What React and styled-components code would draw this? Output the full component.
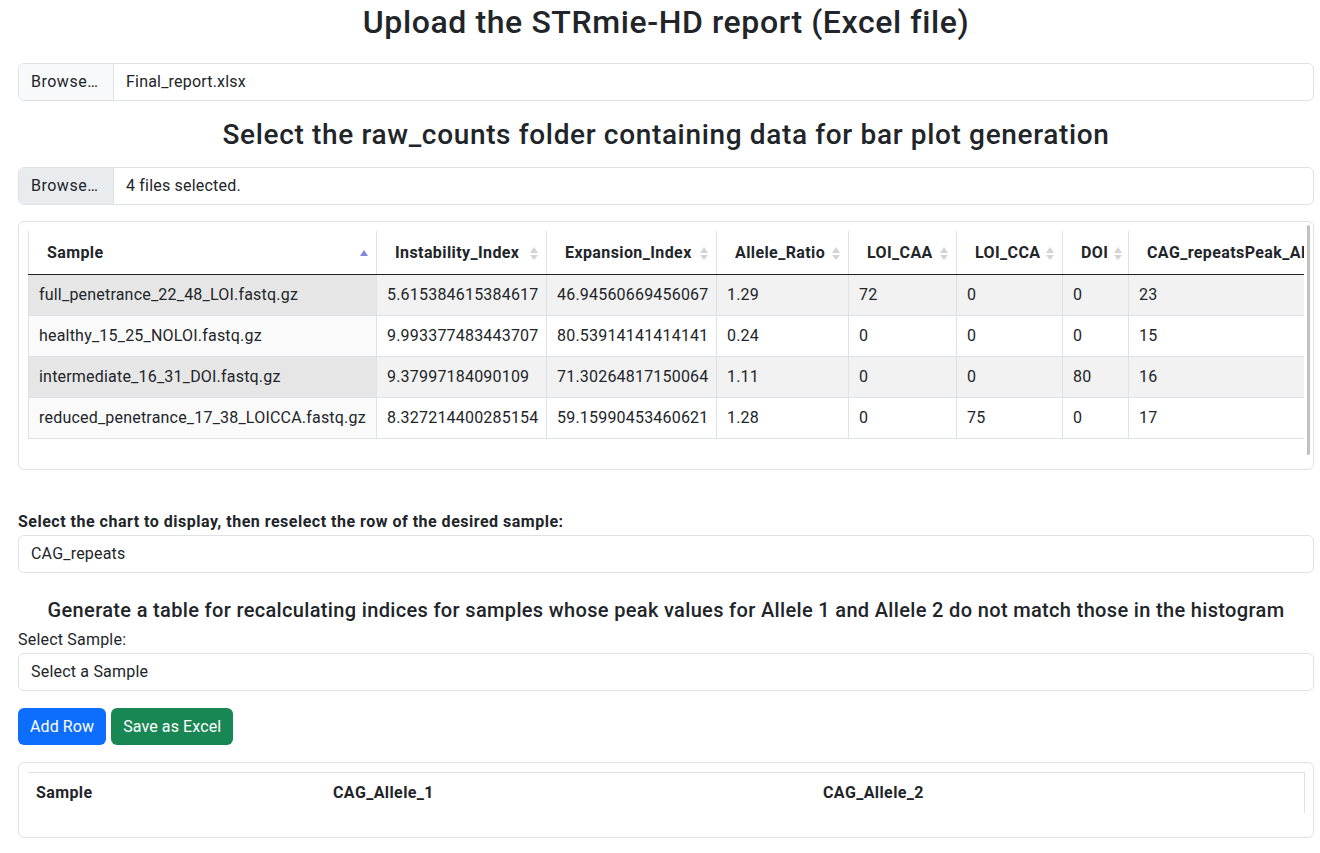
import React from "react";
import styled, { createGlobalStyle } from "styled-components";

const Global = createGlobalStyle`
  html, body { margin: 0; padding: 0; background: #fff; }
  body {
    font-family: Roboto, "Noto Sans", "Liberation Sans", sans-serif;
    font-size: 16px;
    line-height: 24px;
    letter-spacing: 0.2px;
    color: #212529;
  }
  * { box-sizing: border-box; }
`;

const Page = styled.div`
  width: 1296px;
  margin-left: 18px;
  display: flex;
  flex-direction: column;
`;

const Heading = styled.div`
  text-align: center;
  font-weight: 500;
  font-size: ${(p) => p.$size}px;
  line-height: ${(p) => p.$lh}px;
  letter-spacing: ${(p) => p.$ls}px;
  margin: ${(p) => p.$margin};
`;

const InputGroup = styled.div`
  display: flex;
  height: 38px;
  border: 1px solid #dee2e6;
  border-radius: 6px;
  overflow: hidden;
`;

const BrowseBtn = styled.div`
  width: 95px;
  flex: none;
  padding: 0 12px;
  display: flex;
  align-items: center;
  letter-spacing: 0.5px;
  background: ${(p) => (p.$hover ? "#e9ecef" : "#f8f9fa")};
  border-right: 1px solid #dee2e6;
`;

const FileName = styled.div`
  padding: 0 12px;
  display: flex;
  align-items: center;
`;

const TableCard = styled.div`
  margin-top: 16px;
  border: 1px solid #dee2e6;
  border-radius: 6px;
  padding: 3px 3px 14px 9px;
`;

const ScrollRow = styled.div`
  display: flex;
  height: 230px;
`;

const Clip = styled.div`
  flex: 1;
  min-width: 0;
  overflow: hidden;
  padding-top: 6px;
`;

const Thumb = styled.div`
  width: 3px;
  height: 230px;
  margin-left: 3px;
  background: #c1c1c1;
  border-radius: 2px;
  flex: none;
`;

const DataTable = styled.table`
  border-collapse: collapse;
  table-layout: fixed;
  width: 1300px;
`;

const HeadCell = styled.th`
  text-align: left;
  font-weight: 700;
  padding: 10px 8px 9px 18px;
  border-left: 1px solid #dee2e6;
  border-bottom: 1px solid #222;
  white-space: nowrap;
  overflow: hidden;
`;

const HeadInner = styled.div`
  display: flex;
  align-items: center;
  justify-content: space-between;
  gap: 6px;
`;

const HeadText = styled.span`
  white-space: nowrap;
  letter-spacing: 0.4px;
`;

const SortIcon = styled.span`
  display: flex;
  flex-direction: column;
  gap: 2px;
  flex: none;
  width: 8px;
`;

const Tri = styled.span`
  width: 0;
  height: 0;
  border-left: 4px solid transparent;
  border-right: 4px solid transparent;
  ${(p) =>
    p.$down
      ? `border-top: 5px solid ${p.$color};`
      : `border-bottom: 6px solid ${p.$color};`}
`;

const Cell = styled.td`
  padding: 8px 10px;
  border-left: 1px solid #dee2e6;
  border-bottom: 1px solid #dee2e6;
  white-space: nowrap;
  overflow: hidden;
  background: ${(p) =>
    p.$striped ? (p.$sorted ? "#e6e6e6" : "#f2f2f2") : p.$sorted ? "#fafafa" : "#fff"};
`;

const FieldLabel = styled.div`
  font-weight: ${(p) => (p.$bold ? 700 : 400)};
  letter-spacing: ${(p) => (p.$bold ? "0.5px" : "0.2px")};
  margin-top: ${(p) => p.$mt}px;
  margin-bottom: 1px;
`;

const SelectBox = styled.div`
  height: 38px;
  border: 1px solid #dee2e6;
  border-radius: 6px;
  padding: 0 12px;
  display: flex;
  align-items: center;
`;

const ButtonRow = styled.div`
  display: flex;
  gap: 5px;
  margin-top: 17px;
`;

const Button = styled.div`
  height: 37px;
  padding: 0 12px;
  display: flex;
  align-items: center;
  color: #fff;
  letter-spacing: 0.1px;
  border-radius: 6px;
  background: ${(p) => (p.$variant === "success" ? "#198754" : "#0d6efd")};
`;

const BottomCard = styled.div`
  margin-top: 17px;
  border: 1px solid #dee2e6;
  border-radius: 6px;
  padding: 9px 9px 24px 9px;
`;

const BottomTable = styled.table`
  border-collapse: collapse;
  table-layout: fixed;
  width: 1276px;
  border-top: 1px solid #dee2e6;
  border-right: 1px solid #dee2e6;
`;

const BottomHead = styled.th`
  text-align: left;
  font-weight: 700;
  letter-spacing: 0.4px;
  padding: 8px;
`;

const columns = [
  { name: "Sample", w: 348, sorted: true },
  { name: "Instability_Index", w: 170 },
  { name: "Expansion_Index", w: 170 },
  { name: "Allele_Ratio", w: 132 },
  { name: "LOI_CAA", w: 108 },
  { name: "LOI_CCA", w: 106 },
  { name: "DOI", w: 66 },
  { name: "CAG_repeatsPeak_Allele_1", w: 200, noIcon: true },
];

const rows = [
  ["full_penetrance_22_48_LOI.fastq.gz", "5.615384615384617", "46.94560669456067", "1.29", "72", "0", "0", "23"],
  ["healthy_15_25_NOLOI.fastq.gz", "9.993377483443707", "80.53914141414141", "0.24", "0", "0", "0", "15"],
  ["intermediate_16_31_DOI.fastq.gz", "9.37997184090109", "71.30264817150064", "1.11", "0", "0", "80", "16"],
  ["reduced_penetrance_17_38_LOICCA.fastq.gz", "8.327214400285154", "59.15990453460621", "1.28", "0", "75", "0", "17"],
];

function Sort({ asc }) {
  if (asc) {
    return (
      <SortIcon>
        <Tri $color="#8585dc" />
      </SortIcon>
    );
  }
  return (
    <SortIcon>
      <Tri $color="#d4d4d4" />
      <Tri $down $color="#d4d4d4" />
    </SortIcon>
  );
}

export default function App() {
  return (
    <>
      <Global />
      <Page>
        <Heading $size={32} $lh={38} $ls={0.6} $margin="3px 0 22px">
          Upload the STRmie-HD report (Excel file)
        </Heading>
        <InputGroup>
          <BrowseBtn>Browse…</BrowseBtn>
          <FileName>Final_report.xlsx</FileName>
        </InputGroup>
        <Heading $size={28} $lh={34} $ls={0.65} $margin="17px 0 15px">
          Select the raw_counts folder containing data for bar plot generation
        </Heading>
        <InputGroup>
          <BrowseBtn $hover>Browse…</BrowseBtn>
          <FileName>4 files selected.</FileName>
        </InputGroup>

        <TableCard>
          <ScrollRow>
            <Clip>
              <DataTable>
                <colgroup>
                  {columns.map((c) => (
                    <col key={c.name} style={{ width: c.w }} />
                  ))}
                </colgroup>
                <thead>
                  <tr>
                    {columns.map((c) => (
                      <HeadCell key={c.name}>
                        <HeadInner>
                          <HeadText>{c.name}</HeadText>
                          {!c.noIcon && <Sort asc={c.sorted} />}
                        </HeadInner>
                      </HeadCell>
                    ))}
                  </tr>
                </thead>
                <tbody>
                  {rows.map((r, i) => (
                    <tr key={r[0]}>
                      {r.map((v, j) => (
                        <Cell key={j} $striped={i % 2 === 0} $sorted={j === 0}>
                          {v}
                        </Cell>
                      ))}
                    </tr>
                  ))}
                </tbody>
              </DataTable>
            </Clip>
            <Thumb />
          </ScrollRow>
        </TableCard>

        <FieldLabel $bold $mt={40}>
          Select the chart to display, then reselect the row of the desired sample:
        </FieldLabel>
        <SelectBox>CAG_repeats</SelectBox>

        <Heading $size={20} $lh={24} $ls={0.34} $margin="25px 0 6px">
          Generate a table for recalculating indices for samples whose peak values for Allele 1 and Allele 2 do not match those in the histogram
        </Heading>
        <FieldLabel $mt={0}>Select Sample:</FieldLabel>
        <SelectBox>Select a Sample</SelectBox>

        <ButtonRow>
          <Button>Add Row</Button>
          <Button $variant="success">Save as Excel</Button>
        </ButtonRow>

        <BottomCard>
          <BottomTable>
            <colgroup>
              <col style={{ width: 297 }} />
              <col style={{ width: 490 }} />
              <col style={{ width: 489 }} />
            </colgroup>
            <thead>
              <tr>
                <BottomHead>Sample</BottomHead>
                <BottomHead>CAG_Allele_1</BottomHead>
                <BottomHead>CAG_Allele_2</BottomHead>
              </tr>
            </thead>
          </BottomTable>
        </BottomCard>
      </Page>
    </>
  );
}
